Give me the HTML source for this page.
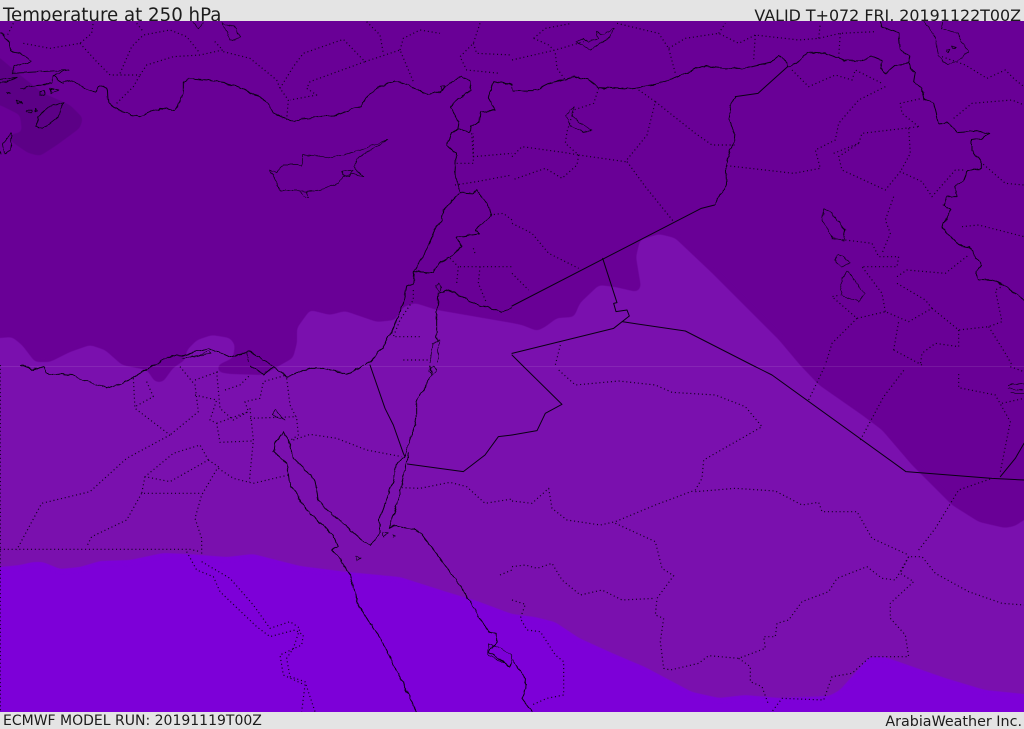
<!DOCTYPE html>
<html><head><meta charset="utf-8"><style>
html,body{margin:0;padding:0;background:#e4e4e4}
svg{display:block}
text{font-family:"DejaVu Sans","Liberation Sans",sans-serif;fill:#1c1c1c}
.s{fill:none;stroke:#0a0014;stroke-width:3;stroke-linejoin:round;stroke-linecap:round}
.d{fill:none;stroke:#12001f;stroke-width:3.6;stroke-dasharray:3.2 8.4;stroke-linecap:butt;stroke-linejoin:round}
</style></head><body>
<svg width="1024" height="729" viewBox="0 0 1024 729" xmlns="http://www.w3.org/2000/svg">
<defs>
<filter id="sm" filterUnits="userSpaceOnUse" x="-40" y="-40" width="1104" height="809" color-interpolation-filters="sRGB">
<feGaussianBlur stdDeviation="2.6"/>
<feComponentTransfer><feFuncA type="linear" slope="6" intercept="-2.5"/></feComponentTransfer>
</filter>
<filter id="w" filterUnits="userSpaceOnUse" x="0" y="0" width="1024" height="729" color-interpolation-filters="sRGB">
<feTurbulence type="fractalNoise" baseFrequency=".13" numOctaves="2" seed="4" result="n"/>
<feDisplacementMap in="SourceGraphic" in2="n" scale="4" xChannelSelector="R" yChannelSelector="G"/>
</filter>
<clipPath id="m"><rect y="21" width="1024" height="691"/></clipPath>
</defs>
<rect width="1024" height="729" fill="#e4e4e4"/>
<text x="3" y="21" font-size="18.2">Temperature at 250 hPa</text>
<text x="1021" y="21" font-size="15.9" text-anchor="end">VALID T+072 FRI, 20191122T00Z</text>
<g clip-path="url(#m)">
<rect y="21" width="1024" height="691" fill="#7a10ae"/>
<path filter="url(#sm)" fill="#690096" d="M-30,-30V338L0,338L12,337L22,345L35,362L50,362L70,352L90,345L105,350L122,365L147,370L155,382L163,382L173,368L185,360L187,350L197,340L212,335L230,338L235,345L233,358L218,365L218,372L230,374L263,375L277,367L293,358L297,343L297,328L310,310L330,315L345,311L377,322L395,320L403,307L415,303L437,310L512,323L522,325L537,331L545,327L557,318L574,317L580,303L599,285L615,287L637,292L641,287L636,257L640,240L659,234L675,238L712,273L752,313L779,340L800,365L819,385L862,415L882,430L912,465L952,505L979,522L1005,528L1015,526L1024,520L1060,500V-30Z"/>
<path filter="url(#sm)" fill="#5c0086" d="M-30,40L0,58L20,75L43,93L70,105L83,118L80,128L57,145L40,156L28,153L12,142L8,135L22,132L20,115L0,105L-30,105Z"/>
<path filter="url(#sm)" fill="#7d00d8" d="M-30,567L0,567L20,565L33,562L43,562L60,569L80,567L100,561L130,560L163,553L187,554L227,557L253,554L300,566L347,572L400,577L447,592L477,601L512,614L535,617L555,622L579,638L612,653L645,667L692,692L719,698L745,695L779,698L829,696L840,690L869,657L885,657L945,678L985,690L1024,694L1060,696V760H-30Z"/>
<rect y="366" width="1024" height="1" fill="#fff" opacity=".09"/>
<g transform="scale(.33333)">
<path class="d" d="M40,70L20,110M70,130L150,145L240,130L275,100L280,65M240,130L290,185L330,225L420,225L440,195L520,170L600,165L668,150L640,120M360,220L395,140L430,105L510,90L560,110L600,160M410,70L430,95M670,155L750,175L830,240L840,265L865,300L860,360M840,265L880,200L910,160L1030,118L1095,185L1040,205L930,245L920,265L950,285L870,300M1095,185L1200,150L1240,245M1200,150L1210,115L1260,90L1320,100M1100,65L1140,105L1150,160M1440,70L1420,130L1380,170L1400,210L1500,220M1420,130L1430,160L1536,165M1415,400L1420,470L1536,460M1370,490L1420,490L1420,400M1365,555L1430,545L1536,525M1470,645L1510,640L1536,660M1420,745L1425,760M1350,775L1375,800L1370,850M1380,800L1440,800L1536,800M1440,800L1435,850L1460,910M1240,870L1240,900L1200,960L1180,1010L1260,1010M1210,1080L1290,1080M350,310L400,260L420,225"/>
</g>
<g transform="translate(512,0) scale(.33333)">
<path class="d" d="M0,180L130,150L215,125M130,160L135,205L160,240M65,115L100,85L180,70M65,115L110,135L130,155M315,70L440,100L470,145L490,220M470,145L520,115L620,100L680,130L730,105L860,120L920,115L985,100L1090,95M620,100L640,70M920,115L925,70M985,100L980,170M730,105L725,180M840,210L890,260L970,225L1020,240L1030,210L1110,250M1120,260L1040,300L980,370L970,420L910,450L925,505L845,520L645,497M965,460L1040,430L1050,400L1220,380M1220,380L1170,340L1165,310L1230,295M1040,430L980,470L990,510L1120,570L1165,515L1230,545L1260,590L1330,510L1360,510M1190,385L1195,460L1165,515M1325,355L1380,310L1500,300L1536,315M1290,170L1360,195L1425,235L1480,210L1510,240L1536,260M1405,485L1480,550L1536,555M1350,680L1400,675L1536,710M260,265L245,310L185,330L165,395L160,430L200,465L340,485L405,405L430,305L380,270M430,305L550,400L600,435L668,435M345,485L400,560L485,665M200,465L195,495L150,535L100,505L0,540M0,470L30,440L160,458L200,465M0,670L60,700L110,760L200,805M0,820L50,870M1000,720L1080,730L1100,770L1160,770L1155,800L1050,800M1145,590L1120,660L1135,700L1110,760M1155,830L1185,810L1300,820L1370,765M1155,850L1240,900L1260,925L1190,965L1120,935L1035,955L960,890L985,885M1120,935L1110,880L1050,800M1035,955L960,1030L940,1095M1145,1050L1160,965M1260,925L1340,990L1430,980L1470,965L1450,870L1470,860M1340,990L1340,1040L1270,1030L1230,1060L1225,1095M1430,980L1480,1060L1500,1095M1145,1050L1230,1095M145,1035L130,1095"/>
<path class="s" d="M670,290L738,280L827,200M608,615L568,625L0,918M272,775L315,908L305,910L312,935L345,930L352,948L305,985L0,1060M0,1065L30,1095M330,965L520,993L720,1095"/>
</g>
<g transform="translate(0,365) scale(.33333)">
<path class="d" d="M400,40L405,130L510,210M440,50L460,95L405,125M510,210L380,280L270,380L125,415L50,555M540,5L585,60L595,140L510,210M585,45L655,20M585,90L650,105L630,165L650,175L660,232L755,228M650,20L660,130L700,165L745,140L735,110L780,100L790,50L860,30M675,75L720,60L750,30M750,160L890,155M860,40L870,120L890,160L895,210L865,230M750,130L760,225L748,350M650,175L745,140M625,285L600,240L520,265L435,335L510,350L625,285M435,335L425,385L600,385M425,385L380,465L275,515L260,545M625,285L655,305L605,390L585,460L605,520L605,570M655,310L700,340L760,355L865,330M0,553L570,553L600,560M560,560L590,615L640,635L660,680L770,785L810,815L885,795L910,810L905,840L840,870L850,930L915,960L905,1040M605,590L690,640L760,720L810,790L870,770L900,790L880,850L860,880L870,935L915,950L945,1040M880,225L930,208L1010,220L1100,255L1205,275M1205,368L1260,370L1350,352L1400,365L1455,415L1536,402M1500,630L1536,615M1,0V1040"/>
<path class="s" d="M1110,0L1155,130L1180,180L1210,265L1215,275M1536,210L1495,215L1455,270L1390,320L1222,297"/>
</g>
<g transform="translate(512,365) scale(.33333)">
<path class="d" d="M0,408L60,415L110,370L120,430L165,465L265,480L310,470L430,420L550,375L570,340L575,285L680,225L750,185L700,125L610,90L480,82L430,60L320,48L190,60L140,15M310,475L430,530L450,610L485,632L435,700L430,750L455,760L445,830L455,910L475,915L560,895L590,872L680,880L760,850L755,815L790,815L795,775L830,765L870,710L950,680L975,640L1065,605L1110,640L1150,645L1190,575L1230,575L1270,625L1370,680L1470,715L1536,720M550,380L670,370L790,378L870,420L920,412L930,440L1035,440L1080,520L1190,570M1190,575L1165,625L1205,650L1135,715L1135,760L1180,810L1190,875L1075,875L1020,925L960,935L935,1005L810,1000L780,1040M680,880L715,905L715,950L750,965L770,1020M0,605L40,600L75,610L120,595L150,645L205,690L270,675L330,705L430,700M0,705L40,718L25,760L45,795L85,800L130,870L155,890L155,990L105,1000L60,1020M1220,555L1270,490L1340,375L1440,340M890,105L940,0M1045,225L1115,95L1180,10M1465,320L1495,170L1450,90L1340,68L1340,20M1470,115L1536,100M1495,5L1536,20"/>
<path class="s" d="M30,0L150,118L100,145L75,197L0,210M720,0L780,30L1182,320L1440,340L1536,345M1465,335L1510,280L1536,235"/>
</g>
<g filter="url(#w)">
<g transform="scale(.33333)">
<path class="s" d="M190,245L215,240L250,262L285,275L300,258L322,268L325,310L360,335L395,345L420,350L480,325L525,330L540,305L550,280L550,245L565,235L660,243L770,285L800,305L830,345L885,365L905,355L1000,348L1060,325L1085,320L1090,300L1130,265L1185,243L1215,250L1283,285L1320,275L1350,250L1385,228L1410,245L1415,270L1390,285L1350,320L1375,365L1370,385L1355,400L1340,435L1368,460L1365,520L1380,578L1330,630L1325,660L1305,690L1270,770L1243,815L1240,850L1220,858L1210,910L1180,985L1150,1040L1100,1095"/>
<path class="s" d="M1370,383L1410,397L1412,378L1437,368L1440,335L1485,330L1465,295L1480,242L1536,255M1536,925L1505,937L1410,905L1370,880L1345,870L1315,880L1310,950L1310,1020M1243,815L1300,818L1315,790L1350,775L1385,740L1370,710L1440,700L1425,690L1475,645L1465,615L1440,585L1430,570L1420,580L1380,578"/>
<path class="s" style="stroke-width:2" d="M1318,848L1308,860L1318,875L1328,860ZM1315,1020L1298,1030L1290,1090M1318,1020L1312,1090M810,510L830,520L850,495L905,495L910,463L985,472L1050,460L1165,420L1070,475L1060,500L1090,530L1060,520L1030,530L1015,550L960,570L920,575L890,570L840,570L820,530ZM900,572L912,590L926,590L920,575M1025,515L1060,510L1045,530L1028,525ZM665,68L700,80L722,112L690,122L680,95ZM580,65L595,85L608,68M1320,262L1335,258L1328,270Z"/>
<path class="s" style="stroke-width:2.5" d="M0,100L30,125L30,155L60,160L95,185L40,200L40,220L120,215L205,210L160,225L190,250M160,225L155,250L60,265M60,265L150,250M150,265L175,270L155,280ZM120,275L135,272L132,288L120,285ZM190,305L150,320L115,350L110,380L130,385L175,350ZM80,332L95,332L95,338L80,338ZM105,325L112,332L105,332ZM50,300L68,310L52,310ZM20,278L32,280L22,284ZM0,240L50,232L20,248L0,250ZM30,398L35,410L30,455L15,460L10,430L25,410ZM0,455L3,462"/>
<path class="s" d="M460,1095L515,1065L545,1068L625,1045L690,1070L750,1055L815,1095"/>
<path class="s" style="stroke-width:2" d="M545,1075L630,1060L625,1052L590,1068ZM740,1058L745,1085"/>
</g>
<g transform="translate(512,0) scale(.33333)">
<path class="s" d="M0,260L5,272L65,272L110,250L185,230L230,240L260,263L340,268L430,253L490,232L570,198L640,205L690,205L775,187L800,168L822,182L827,200L855,190L885,158L940,160L1000,182L1045,183L1080,168L1110,180L1105,205L1120,220L1150,195L1190,188L1195,205L1210,215L1205,245L1230,265L1235,298L1265,310L1280,370L1305,368L1340,398L1395,392L1433,402L1410,415L1380,420L1380,450L1405,485L1405,505L1365,515L1355,540L1330,560L1335,590L1305,590L1295,615L1315,630L1290,682L1340,735L1370,740L1410,795L1390,818L1400,838L1440,840L1490,865L1536,900M1105,65L1110,80L1160,100L1165,150L1195,170L1190,188M672,290L655,320L650,355L670,400L668,430L655,450L643,495L645,555L608,615"/>
<path class="s" style="stroke-width:2" d="M185,320L160,350L175,375L215,395L240,390L215,378L180,350ZM195,125L215,115L225,125L260,115L255,95L275,105L305,85L295,110L235,150ZM1237,65L1270,110L1280,170L1305,195L1340,180L1370,155L1335,100L1290,85L1295,65M935,625L930,660L960,715L995,720L1000,690L960,640ZM980,765L968,780L990,800L1010,790L1000,775ZM1003,815L985,855L990,885L1040,905L1058,880L1020,830ZM1305,150L1315,150L1310,160ZM1320,138L1330,142L1322,146Z"/>
</g>
<g transform="translate(0,365) scale(.33333)">
<path class="s" d="M60,0L100,15L130,5L140,25L220,32L320,70L370,55L430,20L460,0M850,200L825,235L822,260L860,295L870,360L895,390L900,410L945,460L1000,510L1015,545L995,555L1025,590L1050,630L1065,680L1070,710L1160,855L1250,1040M850,200L870,240L880,280L945,345L955,410L1000,450L1090,530L1112,540L1140,505L1140,460L1180,350L1190,300L1215,270L1250,160L1250,110L1295,30L1290,5M1225,265L1205,360L1190,420L1165,490L1180,482L1255,495L1305,560L1350,620L1385,670L1465,800L1490,805L1490,830L1465,860L1530,905M750,0L790,30L820,5L860,35L930,10L970,10L1040,25L1095,0"/>
<path class="s" style="stroke-width:2" d="M828,132L815,145L830,155L855,165L845,155ZM1065,575L1082,582L1070,586ZM1150,503L1165,505L1152,516ZM1178,510L1188,512L1180,518ZM1465,835L1465,870L1530,905L1536,870L1500,850ZM1300,5L1310,15L1295,30L1285,15Z"/>
</g>
<g transform="translate(512,365) scale(.33333)">
<path class="s" d="M0,885L35,930L42,970L30,1000L60,1040"/>
<path class="s" style="stroke-width:2" d="M1490,60L1536,55M1490,70L1530,75M1495,85L1536,85"/>
</g>
</g>
</g>
<rect y="712" width="1024" height="17" fill="#e4e4e4"/>
<text x="3" y="725" font-size="14">ECMWF MODEL RUN: 20191119T00Z</text>
<text x="1022" y="726" font-size="14.3" text-anchor="end">ArabiaWeather Inc.</text>
</svg>
</body></html>
